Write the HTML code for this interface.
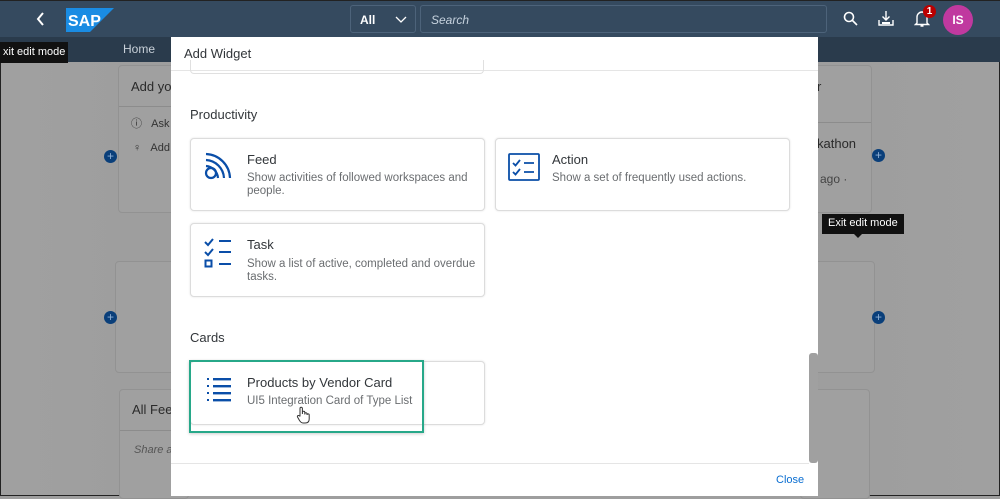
<!DOCTYPE html>
<html><head><meta charset="utf-8"><style>
*{box-sizing:border-box;margin:0;padding:0}
body{width:1000px;height:496px;overflow:hidden;font-family:"Liberation Sans",sans-serif;background:#9e9e9e;position:relative}
.abs{position:absolute}
.bg{left:0;top:0;width:1000px;height:496px;background:linear-gradient(90deg,#a0a0a0,#999 50%,#a0a0a0);border:1px solid #222}
.hdr{left:0;top:0;width:1000px;height:37px;background:#354a5f;border-top:1px solid #222}
.nav{left:0;top:37px;width:1000px;height:25px;background:#2a3b4c}
.pnl{background:#a0a0a0;border:1px solid #929292;border-radius:4px}
.plus{width:13px;height:13px;border-radius:50%;background:#0a3f7a;color:#8fb0d6;font-size:12px;line-height:12px;text-align:center}
.dlg{left:171px;top:37px;width:647px;height:459px;background:#fff}
.card{background:#fff;border:1px solid #dcdcdc;border-radius:4px;box-shadow:0 0 2px rgba(0,0,0,.12)}
.t{font-size:13px;color:#32363a}
.s{font-size:11.5px;color:#6a6d70;line-height:13px}
.tip{background:#111;color:#fff;font-size:11px;padding:3px 6px}
</style></head><body>
<div class="abs bg"></div>
<div class="abs hdr"></div>
<div class="abs nav"></div>
<svg class="abs" style="left:36px;top:12px" width="10" height="14" fill="none" stroke="#fff" stroke-width="2"><path d="M7 1L2 7l5 6"/></svg>
<svg class="abs" style="left:66px;top:8px" width="48" height="24"><polygon points="0,0 48,0 24,24 0,24" fill="#1a8ce3"/><text x="2" y="18" font-family="Liberation Sans" font-weight="bold" font-size="16" fill="#fff">SAP</text></svg>
<div class="abs" style="left:350px;top:5px;width:66px;height:28px;border:1px solid #4d637a;border-radius:3px;color:#fff;font-size:12px;font-weight:bold;padding:7px 9px">All</div>
<svg class="abs" style="left:395px;top:16px" width="12" height="8" fill="none" stroke="#fff" stroke-width="1.3"><path d="M1 1l5 5 5-5"/></svg>
<div class="abs" style="left:420px;top:5px;width:407px;height:28px;border:1px solid #4d637a;border-radius:3px;color:#c6d2de;font-size:12px;font-style:italic;padding:7px 10px">Search</div>
<svg class="abs" style="left:843px;top:11px" width="16" height="16" fill="none" stroke="#fff" stroke-width="1.6"><circle cx="6" cy="6" r="4.5"/><path d="M9.5 9.5L14 14"/></svg>
<svg class="abs" style="left:878px;top:10px" width="16" height="18" fill="none" stroke="#fff" stroke-width="1.4"><path d="M8 1v9M4.5 6.5L8 10l3.5-3.5M1 10v5h14v-5"/><path d="M4 13h8" stroke-width="2"/></svg>
<svg class="abs" style="left:914px;top:10px" width="16" height="18" fill="none" stroke="#fff" stroke-width="1.4"><path d="M3 13V7a5 5 0 0110 0v6l1.5 1.5h-13zM6.5 16h3"/></svg>
<div class="abs" style="left:923px;top:5px;width:13px;height:13px;border-radius:50%;background:#b00;color:#fff;font-size:10px;font-weight:bold;text-align:center;line-height:13px">1</div>
<div class="abs" style="left:943px;top:5px;width:30px;height:30px;border-radius:50%;background:#c0399f;color:#fff;font-size:12px;font-weight:bold;text-align:center;line-height:30px">IS</div>
<div class="abs tip" style="left:0;top:42px;height:21px;padding:4px 3px">xit edit mode</div>
<div class="abs" style="left:123px;top:42px;color:#c9d1d9;font-size:12px">Home</div>
<div class="abs pnl" style="left:118px;top:65px;width:70px;height:148px"></div>
<div class="abs" style="left:119px;top:106px;width:60px;height:1px;background:#8c8c8c"></div>
<div class="abs" style="left:131px;top:79px;font-size:13px;color:#2a2a2a">Add yo</div>
<div class="abs" style="left:131px;top:115px;font-size:11px;color:#333">&#x24D8;&nbsp;&nbsp;&nbsp;Ask</div>
<div class="abs" style="left:133px;top:142px;font-size:11px;color:#333">♀&nbsp;&nbsp;&nbsp;Add</div>
<div class="abs plus" style="left:104px;top:150px">+</div>
<div class="abs pnl" style="left:115px;top:261px;width:70px;height:112px"></div>
<div class="abs plus" style="left:104px;top:311px">+</div>
<div class="abs pnl" style="left:119px;top:389px;width:70px;height:110px"></div>
<div class="abs" style="left:120px;top:430px;width:60px;height:1px;background:#8c8c8c"></div>
<div class="abs" style="left:132px;top:402px;font-size:13px;color:#2a2a2a">All Fee</div>
<div class="abs" style="left:134px;top:444px;font-size:11px;font-style:italic;color:#555">Share a</div>
<div class="abs pnl" style="left:800px;top:65px;width:72px;height:148px"></div>
<div class="abs" style="left:805px;top:122px;width:66px;height:1px;background:#8c8c8c"></div>
<div class="abs" style="left:817px;top:79px;font-size:13px;color:#2a2a2a">r</div>
<div class="abs" style="left:817px;top:136px;font-size:13px;color:#2a2a2a">kathon</div>
<div class="abs" style="left:820px;top:172px;font-size:12px;color:#444">ago ·</div>
<div class="abs plus" style="left:872px;top:149px">+</div>
<div class="abs tip" style="left:822px;top:214px;height:20px">Exit edit mode</div>
<div class="abs" style="left:854px;top:234px;border:4px solid transparent;border-top-color:#111"></div>
<div class="abs pnl" style="left:800px;top:261px;width:75px;height:112px"></div>
<div class="abs plus" style="left:872px;top:311px">+</div>
<div class="abs pnl" style="left:800px;top:389px;width:70px;height:110px"></div>
<div class="abs dlg"></div>
<div class="abs" style="left:184px;top:46px;font-size:13px;color:#32363a">Add Widget</div>
<div class="abs" style="left:171px;top:70px;width:647px;height:1px;background:#e5e5e5"></div>
<div class="abs" style="left:190px;top:60px;width:294px;height:14px;border:1px solid #e0e0e0;border-top:none;border-radius:0 0 4px 4px"></div>
<div class="abs" style="left:190px;top:107px;font-size:13px;color:#32363a">Productivity</div>
<div class="abs card" style="left:190px;top:138px;width:295px;height:73px"></div>
<svg class="abs" style="left:204px;top:152px" width="28" height="30" fill="none" stroke="#0a4ea8" stroke-width="2.2"><circle cx="7" cy="21" r="5"/><path d="M2 8a19 19 0 0118 18M2 2a25 25 0 0124 24M2 14a13 13 0 0112 12"/></svg>
<div class="abs t" style="left:247px;top:152px">Feed</div>
<div class="abs s" style="left:247px;top:172px;width:232px">Show activities of followed workspaces and people.</div>
<div class="abs card" style="left:495px;top:138px;width:295px;height:73px"></div>
<svg class="abs" style="left:508px;top:153px" width="32" height="28" fill="none" stroke="#0a4ea8" stroke-width="1.8"><rect x="1" y="1" width="30" height="26" rx="1"/><path d="M5 10l2.5 2.5L12 7M5 19l2.5 2.5L12 16M16 10h10M16 19h10"/></svg>
<div class="abs t" style="left:552px;top:152px">Action</div>
<div class="abs s" style="left:552px;top:172px">Show a set of frequently used actions.</div>
<div class="abs card" style="left:190px;top:223px;width:295px;height:74px"></div>
<svg class="abs" style="left:204px;top:237px" width="30" height="32" fill="none" stroke="#0a4ea8" stroke-width="2"><path d="M1 5l3 3 5-6M1 15l3 3 5-6M15 4h12M15 15h12M15 27h12"/><rect x="1.5" y="23.5" width="6" height="6"/></svg>
<div class="abs t" style="left:247px;top:237px">Task</div>
<div class="abs s" style="left:247px;top:258px;width:236px">Show a list of active, completed and overdue tasks.</div>
<div class="abs" style="left:190px;top:330px;font-size:13px;color:#32363a">Cards</div>
<div class="abs card" style="left:190px;top:361px;width:295px;height:64px"></div>
<div class="abs" style="left:189px;top:360px;width:235px;height:73px;border:2px solid #27a889;box-shadow:0 1px 3px rgba(0,0,0,.2)"></div>
<svg class="abs" style="left:207px;top:378px" width="26" height="26" fill="#0a4ea8"><rect x="0" y="0" width="2" height="2"/><rect x="0" y="7" width="2" height="2"/><rect x="0" y="14" width="2" height="2"/><rect x="0" y="21" width="2" height="2"/><rect x="6" y="0" width="18" height="2.4"/><rect x="6" y="7" width="18" height="2.4"/><rect x="6" y="14" width="18" height="2.4"/><rect x="6" y="21" width="18" height="2.4"/></svg>
<div class="abs t" style="left:247px;top:375px">Products by Vendor Card</div>
<div class="abs s" style="left:247px;top:395px">UI5 Integration Card of Type List</div>
<svg class="abs" style="left:296px;top:406px" width="14" height="18" fill="#fff" stroke="#333" stroke-width="1"><path d="M4 10V2.5a1.2 1.2 0 012.4 0V8V6.5a1.2 1.2 0 012.4 0V8.5V7.5a1.2 1.2 0 012.2 0V9a1.1 1.1 0 012.2 0v4c0 2.5-1.5 4-4 4H7c-1.5 0-2.5-1-3.5-2.5L1.5 11a1 1 0 011.8-1z"/></svg>
<div class="abs" style="left:809px;top:353px;width:9px;height:110px;background:#a0a0a0;border-radius:3px"></div>
<div class="abs" style="left:171px;top:463px;width:638px;height:1px;background:#e5e5e5"></div>
<div class="abs" style="left:776px;top:474px;font-size:11px;color:#0a6ed1">Close</div>
</body></html>
